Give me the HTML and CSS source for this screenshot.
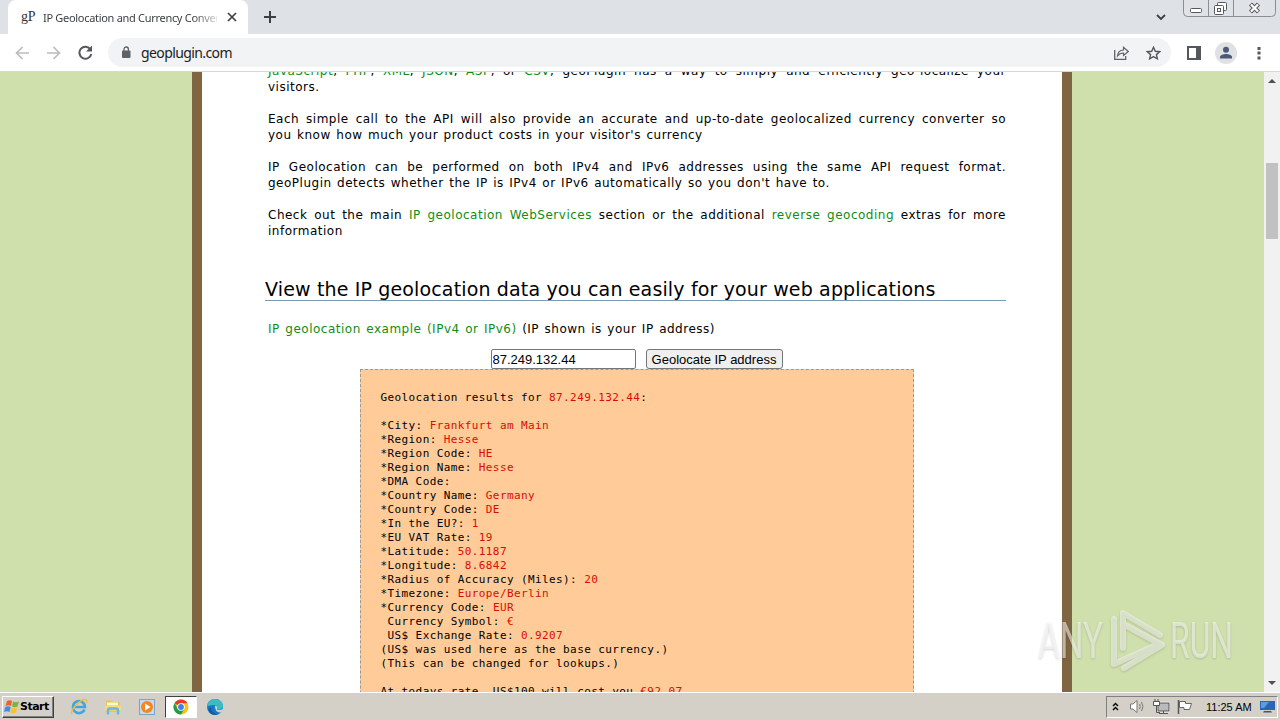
FILE: index.html
```html
<!DOCTYPE html>
<html lang="en">
<head>
    <meta charset="UTF-8">
    <meta name="viewport" content="width=device-width, initial-scale=1.0">
    <title>IP Geolocation and Currency Converter</title>
    <link rel="stylesheet" href="styles.css">
</head>
<body>
    <!-- Tabs -->
    <div class="tabs">
        <div class="tab">
            <span class="favicon">gP</span>
            <span class="tab-title">IP Geolocation and Currency Conver</span>
            <svg class="tab-close" width="10" height="10" viewBox="0 0 10 10"><path d="M1 1l8 8M9 1l-8 8" stroke="#3c4043" stroke-width="1.7"/></svg>
        </div>
        <svg class="new-tab" width="12" height="12" viewBox="0 0 12 12"><path d="M6 0v12M0 6h12" stroke="#3c4043" stroke-width="2"/></svg>
        <svg class="tab-search" width="10" height="7" viewBox="0 0 10 7"><path d="M1 1l4 4 4-4" fill="none" stroke="#3c4043" stroke-width="1.8"/></svg>
        <svg class="window-buttons" width="94" height="18" viewBox="0 0 94 18">
            <path d="M.5 0v12.500q0 4 4 4h84q4 0 4-4V0M25.500 0v16M50.500 0v16" fill="#dfe2e7" stroke="#8b8e93"/>
            <rect x="7.500" y="8.500" width="11" height="4" rx="1" fill="#fff" stroke="#55585e"/>
            <rect x="34.500" y="2.500" width="9" height="8" rx="1" fill="#fff" stroke="#55585e"/>
            <rect x="31.500" y="5.500" width="9" height="9" rx="1" fill="#fff" stroke="#55585e"/>
            <rect x="34.500" y="8.500" width="3" height="3" fill="#fff" stroke="#55585e"/>
            <path d="M67.500 4l8 8M75.500 4l-8 8" stroke="#55585e" stroke-width="4.400"/>
            <path d="M68 4.500l7 7M75 4.500l-7 7" stroke="#fff" stroke-width="2.400"/>
        </svg>
    </div>

    <!-- Toolbar -->
    <div class="toolbar">
        <svg class="back" width="14" height="14" viewBox="0 0 14 14"><path d="M14 7H1.500M7.500 1l-6 6 6 6" fill="none" stroke="#babcbe" stroke-width="1.700"/></svg>
        <svg class="forward" width="14" height="14" viewBox="0 0 14 14"><path d="M0 7h12.500M6.500 1l6 6-6 6" fill="none" stroke="#babcbe" stroke-width="1.700"/></svg>
        <svg class="reload" width="15" height="15" viewBox="0 0 15 15"><path d="M12.500 4.500A6 6 0 1 0 13.300 9" fill="none" stroke="#54575b" stroke-width="2"/><path d="M14 .5v6H8z" fill="#54575b"/></svg>
        <div class="address">
            <svg width="10" height="13" viewBox="0 0 10 13"><rect x="1" y="4.500" width="8.500" height="7.500" rx="1" fill="#5f6368"/><path d="M3 5V3.200a2.200 2.200 0 0 1 4.400 0V5" fill="none" stroke="#5f6368" stroke-width="1.300"/></svg>
            <span class="url">geoplugin.com</span>
            <svg class="share" width="15" height="14" viewBox="0 0 15 14"><path d="M.7 4v9.300h11V10" fill="none" stroke="#5f6368" stroke-width="1.300"/><path d="M3.500 10c.3-4 2.500-5.800 6-6V1.300L14.300 5.500 9.500 9.500V7C7 7 5 8 3.500 10z" fill="none" stroke="#5f6368" stroke-width="1.200"/></svg>
            <svg class="star" width="15" height="14" viewBox="0 0 15 14"><path d="M7.500 1.300l1.800 4 4.400.4-3.300 2.900 1 4.200-3.900-2.200-3.900 2.200 1-4.200L1.300 5.700l4.400-.4z" fill="none" stroke="#54575b" stroke-width="1.400"/></svg>
        </div>
        <svg class="panel" width="14" height="14" viewBox="0 0 14 14"><rect x="1" y="1" width="12" height="12" fill="none" stroke="#54575b" stroke-width="2"/><path d="M9 1h4v12H9z" fill="#54575b"/></svg>
        <svg class="avatar" width="22" height="22" viewBox="0 0 22 22"><circle cx="11" cy="11" r="11" fill="#dfe1e5"/><circle cx="11" cy="7.800" r="3" fill="#4b5a78"/><path d="M5 16.500v-1.500c0-2 3.500-3 6-3s6 1 6 3v1.500z" fill="#4b5a78"/></svg>
        <svg class="menu" width="4" height="14" viewBox="0 0 4 14"><path d="M.5 1h3v3h-3zM.5 5.500h3v3h-3zM.5 10.500h3v3h-3z" fill="#54575b"/></svg>
    </div>

    <!-- Web page -->
    <div class="viewport">
        <div class="page">
            <p><span class="line"><a>JavaScript</a>, <a>PHP</a>, <a>XML</a>, <a>JSON</a>, <a>ASP</a>, or <a>CSV</a>, geoPlugin has a way to simply and efficiently geo-localize your</span>
            visitors.</p>
            <p><span class="line">Each simple call to the API will also provide an accurate and up-to-date geolocalized currency converter so</span>
            you know how much your product costs in your visitor's currency</p>
            <p><span class="line">IP Geolocation can be performed on both IPv4 and IPv6 addresses using the same API request format.</span>
            geoPlugin detects whether the IP is IPv4 or IPv6 automatically so you don't have to.</p>
            <p><span class="line">Check out the main <a>IP geolocation WebServices</a> section or the additional <a>reverse geocoding</a> extras for more</span>
            information</p>
            <h2>View the IP geolocation data you can easily for your web applications</h2>
            <p class="example"><a>IP geolocation example (IPv4 or IPv6)</a> (IP shown is your IP address)</p>
            <form class="lookup">
                <input type="text" value="87.249.132.44">
                <button type="button">Geolocate IP address</button>
            </form>
<pre class="results">
Geolocation results for <b>87.249.132.44</b>:

*City: <b>Frankfurt am Main</b>
*Region: <b>Hesse</b>
*Region Code: <b>HE</b>
*Region Name: <b>Hesse</b>
*DMA Code:
*Country Name: <b>Germany</b>
*Country Code: <b>DE</b>
*In the EU?: <b>1</b>
*EU VAT Rate: <b>19</b>
*Latitude: <b>50.1187</b>
*Longitude: <b>8.6842</b>
*Radius of Accuracy (Miles): <b>20</b>
*Timezone: <b>Europe/Berlin</b>
*Currency Code: <b>EUR</b>
 Currency Symbol: <b>€</b>
 US$ Exchange Rate: <b>0.9207</b>
(US$ was used here as the base currency.)
(This can be changed for lookups.)

At todays rate, US$100 will cost you <b>€92.07</b>
</pre>
        </div>
        <div class="scrollbar">
            <svg width="8" height="4" viewBox="0 0 8 4"><path d="M0 4l4-4 4 4z" fill="#505050"/></svg>
            <div class="thumb"></div>
            <svg width="8" height="4" viewBox="0 0 8 4"><path d="M0 0l4 4 4-4z" fill="#505050"/></svg>
        </div>
    </div>

    <!-- Taskbar -->
    <div class="taskbar">
        <div class="start">
            <svg width="16" height="16" viewBox="0 0 16 16">
                <path d="M3 2q3-1.500 5 0L7 7Q4.500 5.500 1.500 7z" fill="#e8622c"/>
                <path d="M9 2.500q3 1.500 6 0L13.500 7.500q-3 1.300-5.500 0z" fill="#7cb342"/>
                <path d="M1.200 8q3-1.500 5.500 0L5.500 13Q3 11.500 0 13z" fill="#3f8fd8"/>
                <path d="M7.700 8.500q2.500 1.300 5.500 0L12 13.500q-3 1.300-5.500 0z" fill="#fbc02d"/>
            </svg>
            <span>Start</span>
        </div>
        <div class="launch">
            <svg width="18" height="18" viewBox="0 0 18 18">
                <path d="M14.500 11.500A6 6 0 1 1 15 9H5" fill="none" stroke="#42a5e0" stroke-width="2.600"/>
                <path d="M2 16C-1 13 12-1 16.500 2c1 .8.500 2 0 3" fill="none" stroke="#ecbd3c" stroke-width="1.400"/>
            </svg>
        </div>
        <div class="launch">
            <svg width="18" height="18" viewBox="0 0 18 18">
                <path d="M2 2.500h5l1 1.500h8v10H2z" fill="#e5c45c"/>
                <path d="M3 4.500h11v3H3z" fill="#fff6c8"/>
                <path d="M1 7.500h16v5H1z" fill="#f3dc7f"/>
                <path d="M4 16.500v-4q0-2 2-2h6q2 0 2 2v4" fill="none" stroke="#6db6dc" stroke-width="2.400"/>
            </svg>
        </div>
        <div class="launch">
            <svg width="18" height="18" viewBox="0 0 18 18">
                <rect x="1.500" y="1.500" width="15" height="15" fill="#c4dcf0" stroke="#78a5cf"/>
                <circle cx="9" cy="9" r="6" fill="#f4871f"/>
                <path d="M7 5.500L12.500 9 7 12.500z" fill="#fff"/>
            </svg>
        </div>
        <div class="launch running">
            <svg width="16" height="16" viewBox="0 0 16 16">
                <circle cx="8" cy="8" r="7.500" fill="#fbc116"/>
                <path d="M8 8L1.500 4.250A7.500 7.500 0 0 1 14.500 4.250H8z" fill="#e33b2e"/>
                <path d="M1.500 4.250A7.500 7.500 0 0 0 8 15.500L11.300 9.800 8 8 4.700 9.800z" fill="#229b4e"/>
                <circle cx="8" cy="8" r="3.800" fill="#fff"/>
                <circle cx="8" cy="8" r="2.900" fill="#3f7fe8"/>
            </svg>
        </div>
        <div class="launch">
            <svg width="18" height="18" viewBox="0 0 18 18">
                <circle cx="9" cy="9" r="8" fill="#1477c9"/>
                <path d="M1 8.500C1.500 3.500 5 1 9 1c5 0 8 3.500 8 7 0 3-3 4-6 3.500 1-1 1-4.500-3-4.500-3 0-5.500 1-7 1.500z" fill="#36bfc0"/>
                <path d="M11 11.500c-2.500-.5-2.500-3-1.500-4 2 .5 2.300 3 1.500 4zM11 11.500c2 1 4 .7 5.500-.5l1 1.500-2 2c-3 .5-6-1-6-3.500z" fill="#d4d0c8"/>
                <path d="M5 9c0 4 2.500 7 7 7.300-5 2-9-1-9.500-5z" fill="#1559a0"/>
            </svg>
        </div>
        <div class="tray">
            <svg class="chevrons" width="7" height="9" viewBox="0 0 7 9"><path d="M1 4l2.500-2.500L6 4M1 8l2.500-2.500L6 8" fill="none" stroke="#000" stroke-width="1.400"/></svg>
            <svg class="speaker" width="17" height="15" viewBox="0 0 17 15"><path d="M1.500 5h2.500l4-3.500v12L4 10H1.500z" fill="#fff" stroke="#777"/><path d="M10.500 5q1.500 2.500 0 5M12.500 3q3 4.500 0 9" fill="none" stroke="#777"/></svg>
            <svg class="network" width="17" height="16" viewBox="0 0 17 16"><rect x="5" y="4" width="11" height="8" fill="#bbb" stroke="#fff" stroke-width="2.500"/><rect x="5" y="4" width="11" height="8" fill="#bbb" stroke="#555"/><path d="M6 14.500h9M10.500 12v3" stroke="#555"/><path d="M.5 2.500h6v4h-6zM2 0v3M5 0v3" fill="#fff" stroke="#555"/><path d="M3.500 7v6.500H7" fill="none" stroke="#555"/></svg>
            <svg class="flag" width="17" height="16" viewBox="0 0 17 16"><path d="M1.500 1v14" stroke="#555" stroke-width="1.500"/><path d="M2.500 2.500h6v2h6l-2 6H7v-2H2.500z" fill="#fff" stroke="#666"/></svg>
            <span class="clock">11:25 AM</span>
            <svg class="desktop" width="15" height="13" viewBox="0 0 15 13"><path d="M0 1h15v9H0z" fill="#2866b4"/><path d="M1 2h8L4 8H1z" fill="#5d9be0"/><path d="M4 11h7l1 1.500H3z" fill="#305888"/></svg>
        </div>
    </div>

    <svg class="watermark" width="210" height="76" viewBox="0 0 210 76">
        <g class="wm-text">
            <text x="8" y="56" textLength="65" lengthAdjust="spacingAndGlyphs">ANY</text>
            <text x="140" y="56" textLength="63" lengthAdjust="spacingAndGlyphs">RUN</text>
        </g>
        <path class="wm-mark" d="M84 17v45l42-19M93 46V11l37 22M94 66l38-23-37-20"/>
    </svg>
</body>
</html>
```
FILE: styles.css
```css
body {
    margin: 0;
    height: 720px;
    display: flex;
    flex-direction: column;
    overflow: hidden;
    position: relative;
    background: #fff;
    font-family: "DejaVu Sans", sans-serif;
}
svg {
    display: block;
    flex: none;
}

/* Tabs */
.tabs {
    height: 34px;
    flex: none;
    display: flex;
    align-items: center;
    background: #dee1e6;
}
.tab {
    box-sizing: border-box;
    width: 240px;
    height: 34px;
    margin-left: 8px;
    padding: 0 11px 0 13px;
    display: flex;
    align-items: center;
    background: #fff;
    border-radius: 8px 8px 0 0;
}
.favicon {
    width: 22px;
    font: 14px "Liberation Serif", serif;
    letter-spacing: -0.2px;
    color: #333;
}
.tab-title {
    width: 174px;
    font: 11px "Noto Sans", sans-serif;
    letter-spacing: -0.3px;
    color: #3c4043;
    white-space: nowrap;
    overflow: hidden;
    -webkit-mask-image: linear-gradient(to right, #000 150px, transparent 180px);
    mask-image: linear-gradient(to right, #000 150px, transparent 180px);
}
.tab-close {
    margin-left: auto;
}
.new-tab {
    margin-left: 16px;
}
.tab-search {
    margin-left: auto;
}
.window-buttons {
    margin-left: 17px;
    margin-right: 3px;
    align-self: flex-start;
}

/* Toolbar */
.toolbar {
    height: 37px;
    flex: none;
    display: flex;
    align-items: center;
    background: #fff;
    border-bottom: 1px solid #d5d7da;
}
.back {
    margin-left: 15px;
}
.forward {
    margin-left: 18px;
}
.reload {
    margin-left: 17px;
}
.address {
    box-sizing: border-box;
    width: 1063px;
    height: 29px;
    margin-left: 15px;
    padding: 0 10px 0 13px;
    display: flex;
    align-items: center;
    background: #f1f3f4;
    border-radius: 15px;
}
.url {
    margin-left: 10px;
    font: 14px "Noto Sans", sans-serif;
    letter-spacing: -0.6px;
    color: #202124;
}
.share {
    margin-left: auto;
}
.star {
    margin-left: 17px;
}
.panel {
    margin-left: 16px;
}
.avatar {
    margin-left: 14px;
}
.menu {
    margin-left: 20px;
}

/* Page */
.viewport {
    height: 620px;
    flex: none;
    display: flex;
    overflow: hidden;
    background: #cfe0ac;
}
.page {
    box-sizing: border-box;
    width: 880px;
    height: 620px;
    margin-left: 192px;
    padding: 0 56px 0 66px;
    overflow: hidden;
    background: #fff;
    border-left: 10px solid #7f6541;
    border-right: 10px solid #7f6541;
    font-size: 12px;
    line-height: 16px;
    letter-spacing: 0.5px;
    word-spacing: 1.2px;
}
.page p {
    margin: 0 0 16px;
    white-space: nowrap;
}
.page p:first-child {
    margin-top: -9px;
}
.page a {
    color: #138c13;
}
.line {
    display: block;
    text-align: justify;
    text-align-last: justify;
    white-space: normal;
}
.page h2 {
    box-sizing: border-box;
    margin: 38px 0 20px -3px;
    height: 24px;
    padding-top: 1px;
    font-size: 19px;
    font-weight: normal;
    line-height: 23px;
    letter-spacing: 0.15px;
    word-spacing: 0;
    white-space: nowrap;
    border-bottom: 1px solid #7a9db5;
}
.page .example {
    margin-bottom: 12px;
}
.lookup {
    width: 737px;
    height: 20px;
    display: flex;
    justify-content: center;
    gap: 10px;
}
.lookup input,
.lookup button {
    box-sizing: border-box;
    height: 20px;
    margin: 0;
    font: 13px "Liberation Sans", sans-serif;
    border: 1px solid #767676;
    border-radius: 2px;
    color: #000;
}
.lookup input {
    width: 145px;
    padding: 0 1px;
}
.lookup button {
    width: 137px;
    padding: 0;
    background: #efefef;
    border-radius: 3px;
}
.results {
    box-sizing: border-box;
    width: 554px;
    height: 400px;
    margin: 0 0 0 92px;
    padding: 21px 19px 0 19.5px;
    background: #ffcc99;
    border: 1px dashed #999;
    font: 11px "DejaVu Sans Mono", monospace;
    line-height: 14px;
    letter-spacing: 0.4px;
    word-spacing: 0;
}
.results b {
    font-weight: normal;
    color: #d90d00;
}

/* Scrollbar */
.scrollbar {
    box-sizing: border-box;
    width: 16px;
    height: 620px;
    margin-left: auto;
    padding: 7px 0;
    display: flex;
    flex-direction: column;
    align-items: center;
    background: #f1f1f1;
}
.thumb {
    width: 12px;
    height: 76px;
    margin: 80px 0 auto;
    background: #c1c1c1;
}

/* Taskbar */
.taskbar {
    box-sizing: border-box;
    height: 28px;
    flex: none;
    padding: 2px;
    display: flex;
    align-items: center;
    background: #d4d0c8;
    border-top: 1px solid #fff;
}
.start {
    box-sizing: border-box;
    width: 52px;
    height: 22px;
    margin-right: 9px;
    padding-left: 1px;
    display: flex;
    align-items: center;
    border: 1px solid;
    border-color: #fff #404040 #404040 #fff;
    box-shadow: inset -1px -1px #808080;
    font: bold 11px "DejaVu Sans", sans-serif;
    letter-spacing: -0.5px;
}
.launch {
    box-sizing: border-box;
    width: 32px;
    height: 22px;
    margin-right: 2px;
    display: flex;
    align-items: center;
    justify-content: center;
}
.running {
    background: #fff;
    border: 1px solid;
    border-color: #404040 #fff #fff #404040;
}
.tray {
    box-sizing: border-box;
    width: 172px;
    height: 22px;
    margin-left: auto;
    padding-left: 5px;
    display: flex;
    align-items: center;
    border: 1px solid;
    border-color: #808080 #fff #fff #808080;
}
.speaker {
    margin-left: 10px;
}
.network {
    margin-left: 7px;
}
.flag {
    margin-left: 7px;
}
.clock {
    width: 48px;
    margin-left: 12px;
    font: 11px "Liberation Sans", sans-serif;
    white-space: nowrap;
}
.desktop {
    margin-left: 6px;
}

/* Watermark */
.watermark {
    position: absolute;
    left: 1030px;
    top: 602px;
    filter: drop-shadow(0 1px 1px rgba(0, 0, 0, 0.3));
}
.wm-text {
    font: 400 50px Roboto, sans-serif;
    fill: rgba(255, 255, 255, 0.55);
}
.wm-mark {
    fill: none;
    stroke: rgba(255, 255, 255, 0.5);
    stroke-width: 6;
    stroke-linecap: round;
    stroke-linejoin: round;
}
```
